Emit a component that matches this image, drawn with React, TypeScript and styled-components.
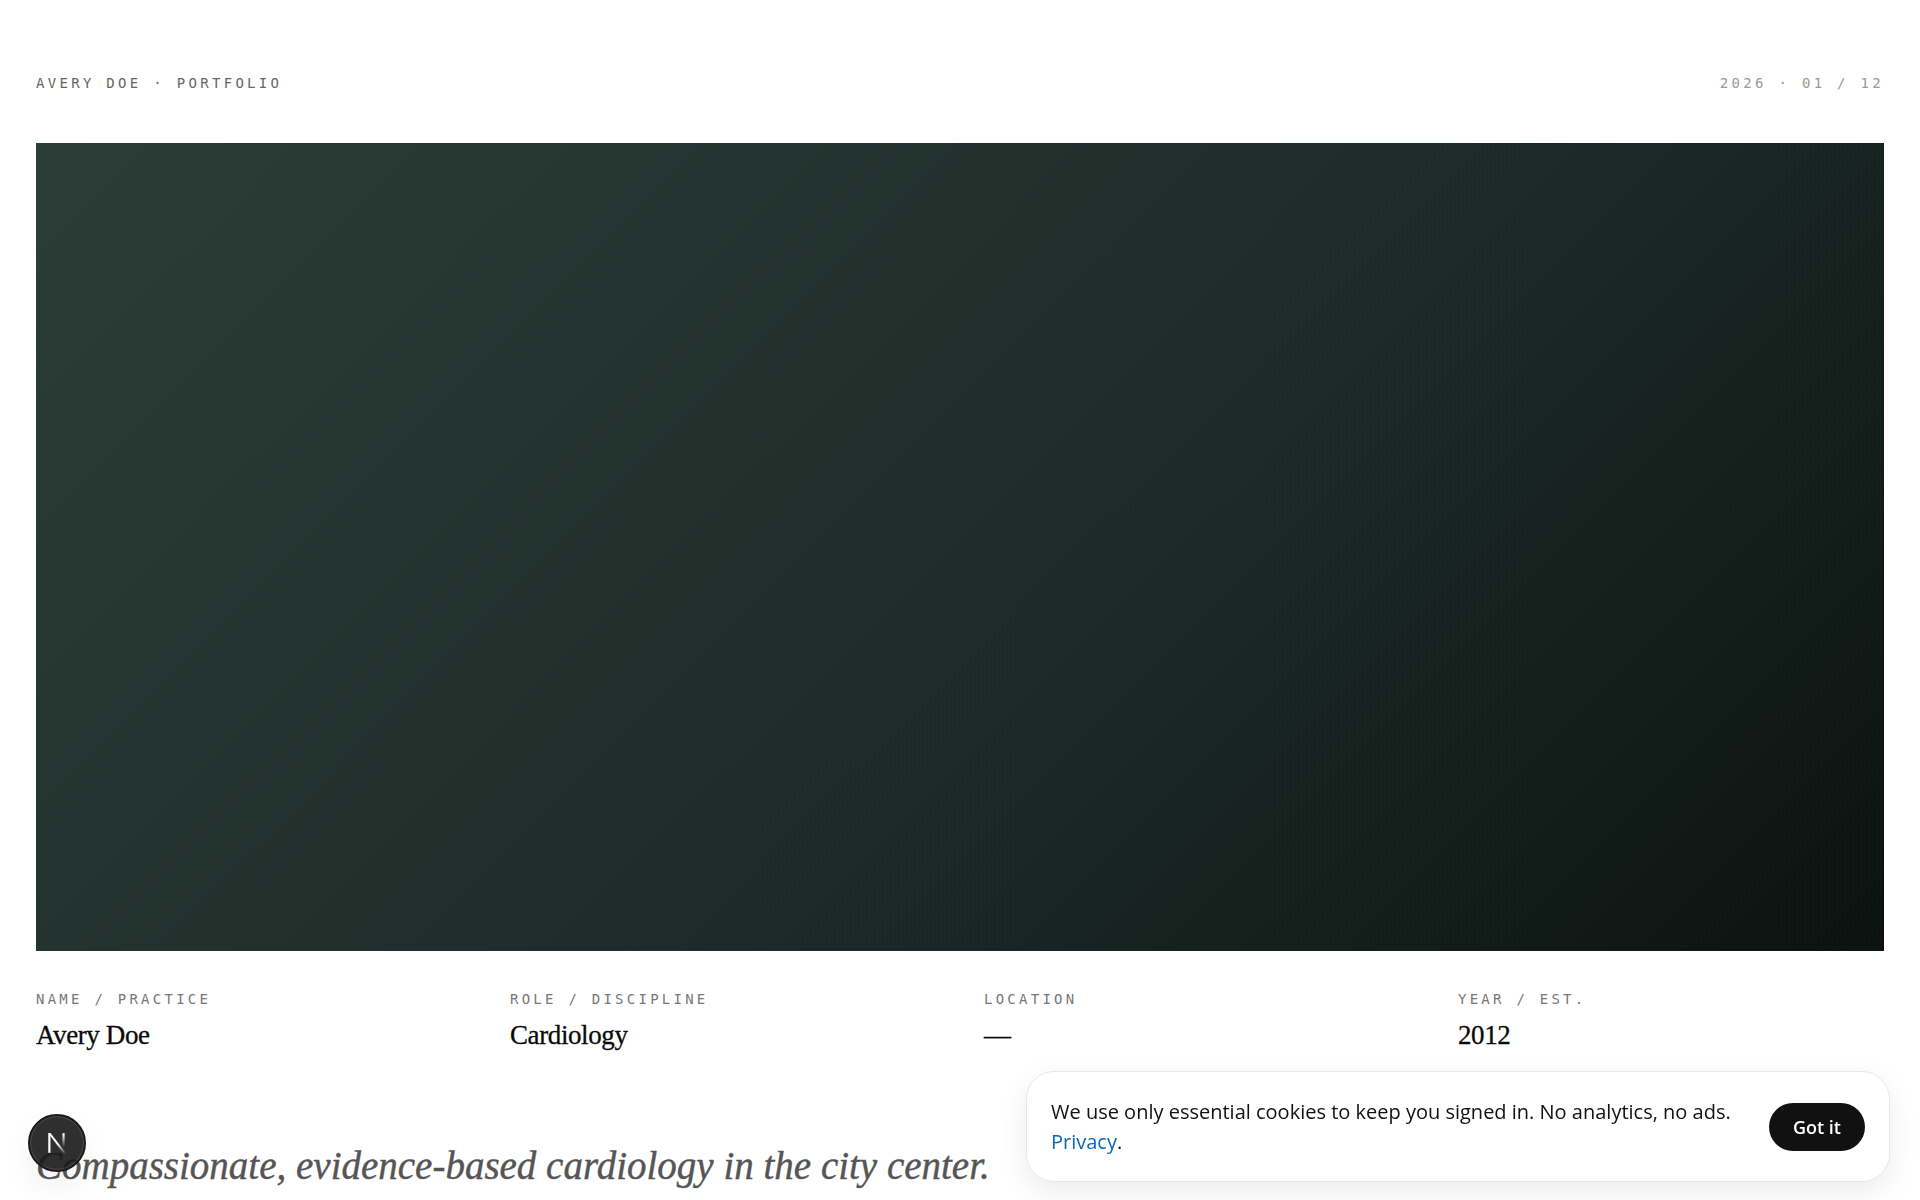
import styled, { createGlobalStyle } from "styled-components";

const GlobalStyle = createGlobalStyle`
  html, body {
    margin: 0;
    padding: 0;
    background: #ffffff;
    overflow: hidden;
  }
`;

const mono = `"DejaVu Sans Mono", "Liberation Mono", monospace`;
const serif = `"Liberation Serif", "DejaVu Serif", serif`;
const sans = `"Open Sans", "Noto Sans", sans-serif`;

const Page = styled.main`
  padding: 71px 36px 0;
`;

const TopBar = styled.header`
  display: flex;
  justify-content: space-between;
  align-items: center;
  height: 24px;
  margin-bottom: 47.5px;
  font-family: ${mono};
  font-size: 14px;
  letter-spacing: 3.3px;
`;

const Brand = styled.span`
  color: #666666;
`;

const DateStamp = styled.span`
  color: #999999;
`;

const Hero = styled.div`
  aspect-ratio: 16 / 7;
  background:
    repeating-linear-gradient(0deg, rgba(255, 255, 255, 0.01) 0 1px, transparent 1px 4px),
    repeating-linear-gradient(90deg, rgba(255, 255, 255, 0.01) 0 1px, transparent 1px 4px),
    linear-gradient(135deg, #2a3c37 0%, #1c2a27 55%, #0a110f 100%);
`;

const Facts = styled.dl`
  display: grid;
  grid-template-columns: repeat(4, 1fr);
  gap: 48px;
  margin: 38px 0 0;
`;

const Fact = styled.div`
  display: flex;
  flex-direction: column;
  gap: 9px;
`;

const FactLabel = styled.dt`
  font-family: ${mono};
  font-size: 14px;
  letter-spacing: 3.25px;
  line-height: 20px;
  color: #777777;
`;

const FactValue = styled.dd`
  margin: 0;
  font-family: ${serif};
  font-size: 27px;
  line-height: 34px;
  letter-spacing: -0.4px;
  color: #0a0a0a;
  -webkit-text-stroke: 0.3px #0a0a0a;
`;

const Lede = styled.p`
  margin: 90px 0 0;
  font-family: ${serif};
  font-style: italic;
  font-size: 39px;
  line-height: 48px;
  color: #555555;
  -webkit-text-stroke: 0.4px #555555;
`;

const CookieBar = styled.aside`
  position: fixed;
  right: 30px;
  bottom: 18px;
  box-sizing: border-box;
  width: 864px;
  height: 111px;
  display: flex;
  align-items: center;
  gap: 36px;
  padding: 0 24px;
  background: #ffffff;
  border: 1px solid #e6e6e6;
  border-radius: 28px;
  box-shadow: 0 10px 30px rgba(0, 0, 0, 0.08);
`;

const CookieText = styled.p`
  flex: 1;
  margin: 0;
  font-family: ${sans};
  font-size: 20px;
  line-height: 30px;
  color: #111111;
`;

const PrivacyLink = styled.a`
  color: #0a66b8;
  text-decoration: none;
`;

const GotIt = styled.button`
  flex: none;
  width: 96px;
  height: 48px;
  padding: 0;
  border: none;
  border-radius: 24px;
  background: #111111;
  color: #ffffff;
  font-family: ${sans};
  font-size: 18px;
  font-weight: 600;
`;

const DevBadge = styled.div`
  position: fixed;
  left: 28px;
  bottom: 28px;
  box-sizing: border-box;
  width: 58px;
  height: 58px;
  display: flex;
  align-items: center;
  justify-content: center;
  border-radius: 50%;
  background: rgba(24, 24, 24, 0.9);
  border: 2px solid #1a1a1a;
  box-shadow: 0 0 0 1px rgba(255, 255, 255, 0.15) inset, 0 16px 32px rgba(0, 0, 0, 0.06);
`;

function NextMark() {
  return (
    <svg width="24" height="24" viewBox="0 0 22 22" fill="none">
      <defs>
        <linearGradient id="n-fade" x1="6" y1="4" x2="20" y2="20" gradientUnits="userSpaceOnUse">
          <stop offset="0.45" stopColor="#ffffff" />
          <stop offset="1" stopColor="#ffffff" stopOpacity="0" />
        </linearGradient>
        <linearGradient id="n-stem" x1="16" y1="3" x2="16" y2="15" gradientUnits="userSpaceOnUse">
          <stop stopColor="#ffffff" />
          <stop offset="1" stopColor="#ffffff" stopOpacity="0" />
        </linearGradient>
      </defs>
      <path d="M3 2h2v18H3z" fill="#ffffff" />
      <path d="M3 2h2.2L20 21h-2.6z" fill="url(#n-fade)" />
      <path d="M16 2h2v14h-2z" fill="url(#n-stem)" />
    </svg>
  );
}

const facts = [
  { label: "NAME / PRACTICE", value: "Avery Doe" },
  { label: "ROLE / DISCIPLINE", value: "Cardiology" },
  { label: "LOCATION", value: "—" },
  { label: "YEAR / EST.", value: "2012" },
];

export default function App() {
  return (
    <>
      <GlobalStyle />
      <Page>
        <TopBar>
          <Brand>AVERY DOE · PORTFOLIO</Brand>
          <DateStamp>2026 · 01 / 12</DateStamp>
        </TopBar>
        <Hero />
        <Facts>
          {facts.map((fact) => (
            <Fact key={fact.label}>
              <FactLabel>{fact.label}</FactLabel>
              <FactValue>{fact.value}</FactValue>
            </Fact>
          ))}
        </Facts>
        <Lede>Compassionate, evidence-based cardiology in the city center.</Lede>
      </Page>
      <DevBadge>
        <NextMark />
      </DevBadge>
      <CookieBar>
        <CookieText>
          We use only essential cookies to keep you signed in. No analytics, no ads.{" "}
          <PrivacyLink href="#privacy">Privacy</PrivacyLink>.
        </CookieText>
        <GotIt>Got it</GotIt>
      </CookieBar>
    </>
  );
}
